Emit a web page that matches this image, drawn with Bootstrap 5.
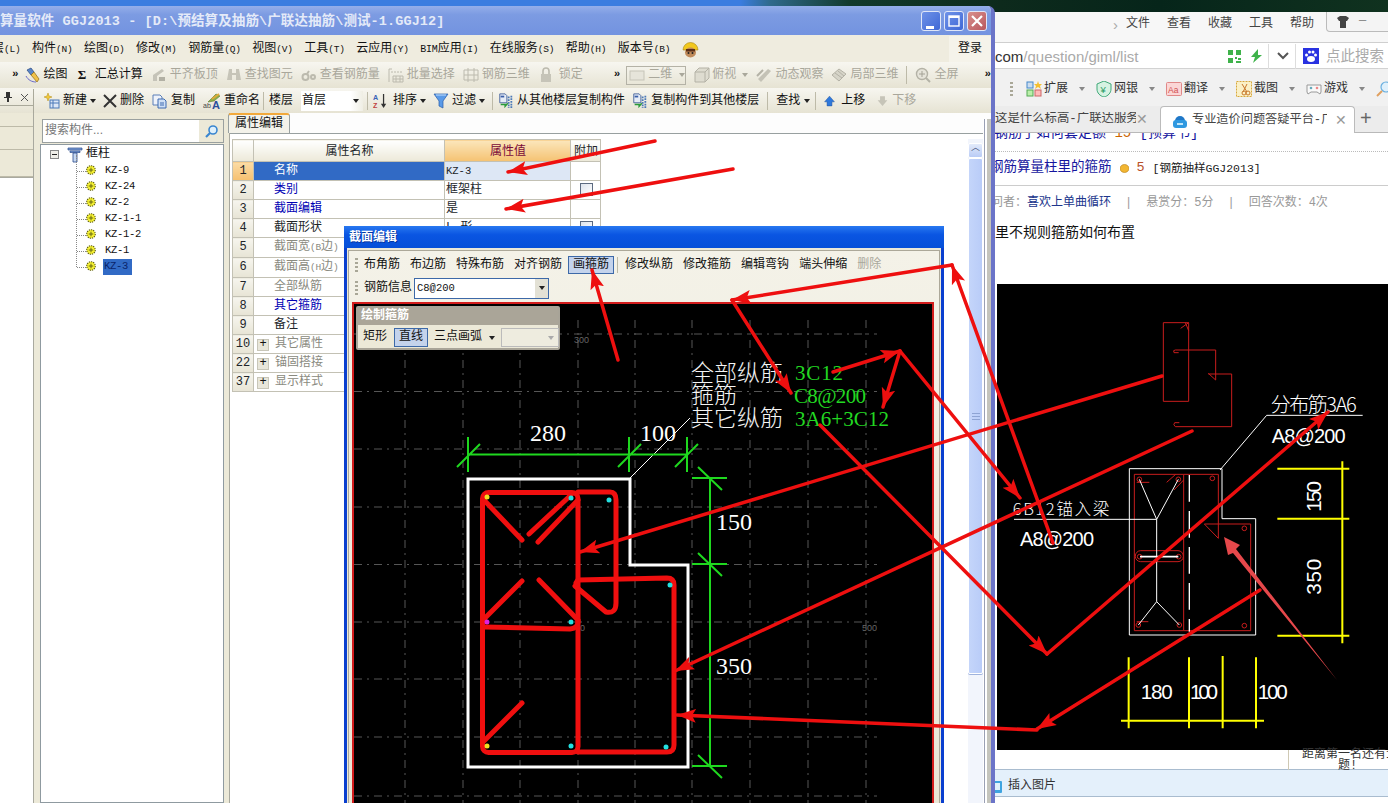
<!DOCTYPE html>
<html lang="zh-CN">
<head>
<meta charset="UTF-8">
<title>GGJ2013</title>
<link href="https://cdn.jsdelivr.net/npm/bootstrap@5.3.0/dist/css/bootstrap.min.css" rel="stylesheet">
<style>
html,body{margin:0;height:803px;overflow:hidden}
body{position:relative;width:1388px;font:12px/1.2 "Liberation Mono","Noto Sans CJK SC",monospace;color:#111;
  background:linear-gradient(90deg,#3b7de0 0,#3b7de0 740px,#2f6a8c 770px,#123a2c 850px,#0d2a1c 1000px,#06251a 1160px,#10321f 1388px)}
.ltn{font-size:9.5px;letter-spacing:-.2px}
.ic{width:16px;height:16px;flex:none}
.tri{display:inline-block;border:3px solid transparent;border-top:4px solid #222;border-bottom:0;flex:none}
.dis{color:#a9a79b}.dis .tri{border-top-color:#a9a79b}
.ggj-win{position:absolute;left:0;top:6px;width:995px;height:797px;z-index:5;background:#ece9d8;border-right:4px solid #6b74c8;overflow:hidden;border-top-right-radius:7px}
.ggj-title{height:29px;background:linear-gradient(180deg,#94aeea 0,#7c9be2 30%,#7393e0 100%);color:#e4eaf8;font-weight:700;font-size:13.5px;white-space:nowrap;letter-spacing:.1px}
.ggj-title>span:first-child{padding-top:4px}
.win-btn{width:20px;height:20px;border-radius:3px;border:1px solid #dfe6f7;background:linear-gradient(135deg,#6e92e8,#3f68d6);color:#fff;margin-left:3px}
.win-btn.cl{background:linear-gradient(135deg,#d8908c,#b9575e)}
.ggj-menu{height:27px;background:#efecdf;white-space:nowrap;padding-top:1px}
.ggj-menu>span{margin-right:11.5px}
.login-b{background:#f5f3ea;height:26px;padding:0 9px;margin-right:0!important}
.tbar{height:26px;background:linear-gradient(180deg,#f7f6f0,#e6e3d3);white-space:nowrap;gap:8px}
.tbar2{height:25px;gap:0;padding-top:1px}
.ti{display:inline-flex;align-items:center;gap:3px}
.vsep{width:1px;height:18px;background:#bdbaa8;flex:none}
.pin-col{width:34px;height:100%;flex:none;border-right:1px solid #aaa99b}
.pin-box{height:17px;border-bottom:1px solid #aaa99b;color:#333}
.ggj-main{height:690px;background:#ece9d8}
.rail{width:34px;flex:none;border-right:1px solid #a9a99f}
.rail i{display:block;height:23px;border-bottom:1px solid #bdbaa8}
.rail b{display:block;flex:1;background:#fff;border-top:1px solid #a9a99f}
.tree-pane{width:184px;margin-left:6px;flex:none}
.srch{height:24px;margin:6px 0 1px 2px;background:#fff;border:1px solid #9aa09f;color:#777;padding-left:2px}
.srch>span{flex:1}
.srch small{font:12px "Liberation Sans",sans-serif}
.srch em{width:24px;height:22px;background:#ece9d8;display:flex;align-items:center;justify-content:center}
.tree-box{flex:1;background:#fff;border:1px solid #8f9aa0;padding:0 0 0 9px}
.tr-row{height:16px;position:relative;padding-left:36px}
.tr-row svg{position:absolute;left:36px;top:2px}
.tr-row u{position:absolute;left:27px;top:8px;width:9px;border-top:1px dotted #888}
.tr-txt{font-size:10.5px;letter-spacing:-.3px;margin-left:18px;padding:1px;display:inline-block;height:16px;line-height:13px}
.tr-sel{background:#316ac5;color:#0a246a;margin-left:17px;padding:1px 4px 1px 1px}
.tr-line{position:absolute;left:26px;top:-8px;height:112px;border-left:1px dotted #888}
.pr-pane{width:765px;margin-left:5px;background:#fff;border-left:1px solid #a9a99f;flex:none}
.tab-strip{height:21px;border-bottom:1px solid #98a0a0;padding-left:0;background:#fdfdfd}
.tab-on{width:62px;height:20px;margin-left:-2px;border:1px solid #98a0a0;border-bottom:0;border-top:2px solid #f2a93b;border-radius:3px 3px 0 0;background:#f3f2ea;text-align:center;line-height:18px}
table.ptbl{table-layout:fixed;width:368px;margin:5px 0 0 2px;border-color:#c3c1b4}
table.ptbl td,table.ptbl th{padding:0 0 0 1px;height:19px;line-height:18px;font-weight:400;border:1px solid #c3c1b4;white-space:nowrap;overflow:hidden;box-shadow:none}
table.ptbl th{height:22px;text-align:center;background:linear-gradient(180deg,#fff,#ece9d8)}
table.ptbl th.hl{background:linear-gradient(180deg,#fbe6bb,#f5c272);color:#7a0a3a}
table.ptbl td.rn{text-align:center;background:linear-gradient(180deg,#f6f5ee,#e7e4d5);padding:0}
table.ptbl td.rn.on{background:linear-gradient(180deg,#fbdca6,#f6c070)}
td.nm{padding-left:20px!important}
td.nm.sel{background:#316ac5;color:#fff}
td.vl.sel{background:#dde7f5}
.bl{color:#0000b4}.gy{color:#8a8a80}
.chk{display:block;width:13px;height:13px;margin:2px auto;border:1px solid #5c6a80;background:linear-gradient(135deg,#dde3ec,#fff)}
.plus{display:inline-block;width:12px;height:12px;background:#e8e6da;border:1px solid #c8c6b8;line-height:9px;text-align:center;margin:0 6px 0 -17px;color:#111}
.sb-col{position:absolute;left:968px;top:133px;width:15px;height:670px;background:#f2f5fc}
.sb-col::after{content:"";position:absolute;left:15px;top:-20px;width:8px;height:690px;background:repeating-linear-gradient(90deg,#fff 0,#fff 1px,#9aa0b4 1px,#9aa0b4 2px,#fff 2px,#fff 4px,#c4c4bc 4px,#c4c4bc 8px)}
.sb-up{height:15px;background:linear-gradient(180deg,#e3ebfb,#b9cbf5);border:1px solid #fff;border-radius:2px;text-align:center;line-height:9px;color:#44527a;font-size:9px}
.sb-th{height:516px;background:linear-gradient(90deg,#c4d5fa,#b9ccf8);border:1px solid #fff;border-radius:2px;box-shadow:0 1px 0 #9fb3dd}
.dlg{position:absolute;left:344px;top:226px;width:600px;height:577px;z-index:8;background:#ece9d8;border:3px solid #0a3fcf;border-top:0;border-bottom:0}
.dlg-t{height:22px;margin:0 -3px;background:linear-gradient(180deg,#2878f0 0,#0a55e2 40%,#0650d8 100%);color:#fff;font-weight:700;padding-left:5px;line-height:25px;text-shadow:1px 1px 0 #0636a0;overflow:hidden}
.dlg-in{margin:2px 1px 0;border:1px solid #aca899;border-bottom:0;background:linear-gradient(180deg,#f4f2e8,#e9e6d6);height:553px}
.grip{width:3px;height:14px;margin:0 6px 0 6px;background:repeating-linear-gradient(180deg,#a9a797 0,#a9a797 2px,transparent 2px,transparent 4px);flex:none}
.d-bar{height:26px;white-space:nowrap;padding-top:3px}
.d-bar span.bt{margin-right:10px}
.press{border:1px solid #3d69a8;background:#c4d3ec;padding:1px 4px;white-space:nowrap}
.d-bar span.press{margin:0 3px 0 -4px}
.d-bar2{height:25px}
.cbx{width:135px;height:21px;margin-left:2px;border:1px solid #3d69a8;background:#fff;padding-left:2px;font-size:10.5px}
.cbx>span{flex:1}
.cbx em{width:13px;height:19px;background:#e3e1d5;display:flex;align-items:center;justify-content:center}
.cad{height:501px;margin:2px 5px 0 3px;border:2px solid #d31d1d;border-bottom:0;background:#000;position:relative}
.cad svg{display:block;width:100%;height:100%}
.float-tb{position:absolute;left:2px;top:2px;width:204px;height:44px;background:#ece9d8;border:2px solid #a8a498;border-radius:2px}
.float-h{height:17px;background:#aaa598;color:#fff;font-weight:700;padding-left:3px;line-height:17px}
.float-r{height:25px;padding-left:5px;white-space:nowrap}
.float-r .press{margin:0 6px 0 7px}
.cmb-d{width:58px;height:19px;border:1px solid #bbb;background:#eeecdf;margin-left:6px;flex:none}
.brw{position:absolute;left:980px;top:12px;width:408px;height:791px;background:#fff;overflow:hidden;border-top-left-radius:4px}
.b-menu{height:31px;background:#f7f7f7;border-bottom:1px solid #cfcfcf;position:relative;white-space:nowrap;color:#444;font-size:12px;padding-bottom:5px}
.b-menu a,.b-tools span{color:inherit;text-decoration:none}
.b-menu a{margin-right:17px}
.b-ctl{position:absolute;left:346px;top:0;width:70px;height:20px;border:1px solid #bbb;border-top:0;border-radius:0 0 0 4px;background:#f4f4f4}
.b-addr{height:26px;background:#fff;border-bottom:1px solid #d2d2d2;font:15px/1 "Liberation Sans","Noto Sans CJK SC",sans-serif;color:#aaa;white-space:nowrap;position:relative;padding-top:1px}
.b-addr b{font-weight:400;color:#333}
.b-tools{height:37px;background:#f1f1f1;white-space:nowrap;color:#333;font-size:12px;padding-top:3px}
.b-tools .ic{margin-right:2px}
.b-tools .tri{border-top-color:#888;margin:0 11px}
.b-tabs{height:27px;background:#ececec;border-bottom:1px solid #b9b9b9;position:relative;white-space:nowrap;color:#444;padding-top:1px}
.b-tab-a{position:absolute;left:180px;top:0;width:195px;height:27px;background:#fff;border:1px solid #bbb;border-bottom:0;border-radius:4px 4px 0 0;padding-left:11px;padding-top:1px}
.b-x{font-size:14px;color:#999;font-family:"Liberation Sans",sans-serif}
.b-page{height:670px;background:#fff;position:relative;overflow:hidden}
.p-cut{height:19px;border-bottom:1px dotted #bbb;font-size:14px;color:#15159e;padding-left:14px;overflow:hidden;line-height:1;white-space:nowrap}
.p-cut div{margin-top:-7px}
.p-ttl{height:34px;border-bottom:1px solid #ccc;white-space:nowrap;font-size:13.5px;color:#15159e;padding-left:10px}
.p-meta{height:34px;color:#999;white-space:nowrap;padding-left:11px}
.p-q{height:26px;font-size:14px;color:#111;padding-left:15px}
.p-img{margin:38px 0 0 17px;height:466px;background:#000}
.p-img svg{display:block;width:391px;height:466px}
.p-foot{height:20px;position:relative;border-bottom:1px solid #a9bccf;margin-left:15px}
.p-foot div{position:absolute;left:293px;top:0;height:20px;width:110px;border-left:1px solid #cfc9b4;text-align:center;font-size:12px;line-height:11px;color:#333;white-space:nowrap;padding-left:8px}
.p-ins{height:27px;background:#e4f0fb;border-bottom:1px solid #a9bccf;margin-left:15px;color:#333;font-size:12px;padding-top:7px}
.p-ins svg{margin-left:-5px}
.arrows{position:absolute;left:0;top:0;width:1388px;height:803px;z-index:20;pointer-events:none}
</style>
</head>
<body>

<svg width="0" height="0" class="position-absolute">
 <defs>
  <symbol id="i-draw" viewBox="0 0 16 16"><path d="M2 3l4-2 3 4-3 3z" fill="#5a86c8" stroke="#27467f" stroke-width=".7"/><path d="M6 8l3-3 5 7-2 3z" fill="#f0c24a" stroke="#8a6a18" stroke-width=".7"/><path d="M1 9c2 4 6 6 10 6" fill="none" stroke="#6a6ac8"/></symbol>
  <symbol id="i-flush" viewBox="0 0 16 16"><path d="M2 14V8l9-6 2 2-7 5v5z" fill="#c5c3b8"/><path d="M8 10h6v4H8z" fill="#b2b0a4"/></symbol>
  <symbol id="i-bino" viewBox="0 0 16 16"><path d="M3 2h3v4h4V2h3l2 11h-5V8H6v5H1z" fill="#c6c4b8"/></symbol>
  <symbol id="i-glass" viewBox="0 0 16 16"><circle cx="4.5" cy="10" r="3" fill="none" stroke="#bcbaae" stroke-width="2"/><circle cx="12" cy="10" r="2" fill="none" stroke="#bcbaae" stroke-width="2"/><path d="M6 7l2-3" stroke="#bcbaae" stroke-width="2"/></symbol>
  <symbol id="i-batch" viewBox="0 0 16 16"><path d="M1 2v13M1 2h3M5 9h10v6H5zM5 12h10M8 9v6M12 9v6" fill="none" stroke="#bcbaae"/><path d="M3 5h11" stroke="#bcbaae" stroke-dasharray="2 1"/></symbol>
  <symbol id="i-grid" viewBox="0 0 16 16"><path d="M1 3h14v10H1zM1 8h14M5 1v14M11 1v14" fill="none" stroke="#bcbaae"/></symbol>
  <symbol id="i-lock" viewBox="0 0 16 16"><path d="M5 7V4a3 3 0 016 0v3" fill="none" stroke="#bcbaae" stroke-width="1.6"/><rect x="3" y="7" width="10" height="8" fill="#c6c4b8"/></symbol>
  <symbol id="i-cube" viewBox="0 0 16 16"><path d="M1 5l4-4h10v10l-4 4H1zM1 5h10v10M11 5l4-4" fill="#dedcd0" stroke="#b4b2a6"/></symbol>
  <symbol id="i-orbit" viewBox="0 0 16 16"><path d="M2 12L12 2l3 2L5 15z" fill="#c4c2b6"/><path d="M1 9l6-6" stroke="#b4b2a6" stroke-width="2"/></symbol>
  <symbol id="i-local" viewBox="0 0 16 16"><path d="M1 8l7-6 7 5-7 7z" fill="#d6d4c8" stroke="#b4b2a6"/><path d="M4 6l7 5M7 4l6 5" stroke="#b4b2a6"/></symbol>
  <symbol id="i-zoom" viewBox="0 0 16 16"><circle cx="7" cy="7" r="5.5" fill="#e6e4da" stroke="#b4b2a6" stroke-width="1.4"/><path d="M7 4v6M4 7h6" stroke="#a4a296"/><path d="M11 11l4 4" stroke="#b4b2a6" stroke-width="2"/></symbol>
  <symbol id="i-new" viewBox="0 0 16 16"><path d="M4 0l1 3 3 1-3 1-1 3-1-3-3-1 3-1z" fill="#f2c93a" stroke="#b48c10" stroke-width=".5"/><rect x="6" y="7" width="9" height="8" fill="#dbe6f6" stroke="#4a78b8"/><path d="M6 10h9M9 7v8" stroke="#4a78b8"/></symbol>
  <symbol id="i-del" viewBox="0 0 14 14"><path d="M1 1l12 12M13 1L1 13" stroke="#333" stroke-width="2"/></symbol>
  <symbol id="i-copy" viewBox="0 0 16 16"><path d="M1 2h7l2 2v8H1z" fill="#eef2fa" stroke="#5a7fb8"/><path d="M6 6h6l2 2v7H6z" fill="#cfe0f6" stroke="#3f6bb0"/><path d="M8 10h4M8 12h4" stroke="#3f6bb0"/></symbol>
  <symbol id="i-rename" viewBox="0 0 18 16"><path d="M5 9l8-8 4 2-6 5z" fill="#8bb04a" stroke="#5c7a2e" stroke-width=".6"/><path d="M9 6l7-5" stroke="#e0a93a" stroke-width="2"/><text x="0" y="15" font-family="Liberation Sans" font-size="7" fill="#444">ab</text><text x="9" y="15.5" font-family="Liberation Sans" font-weight="700" font-size="11" fill="#2a4f9c">A</text></symbol>
  <symbol id="i-sort" viewBox="0 0 16 18"><text x="0" y="8" font-family="Liberation Sans" font-weight="700" font-size="8" fill="#3a62b8">A</text><text x="0" y="17" font-family="Liberation Sans" font-weight="700" font-size="8" fill="#c04040">Z</text><path d="M12 1v14" stroke="#333" stroke-width="1.4"/><path d="M9 12l3 5 3-5z" fill="#333"/></symbol>
  <symbol id="i-filter" viewBox="0 0 16 16"><path d="M1 1h14L10 8v7l-4-2V8z" fill="#5a9ae8" stroke="#2a5ca8" stroke-width=".7"/><path d="M3 2h10" stroke="#c6e0fb"/></symbol>
  <symbol id="i-floor" viewBox="0 0 16 18"><path d="M1 1h6l2 2v8H1z" fill="#e6ecf6" stroke="#3f5f98"/><path d="M11 4v13M14 3v14" stroke="#4a78b8" stroke-width="2" stroke-dasharray="2 1"/><path d="M2 13h5v2l3-3.5" fill="none" stroke="#2a9a3a" stroke-width="1.6"/><rect x="2" y="3" width="4" height="2" fill="#3a5fa8"/></symbol>
  <symbol id="i-up" viewBox="0 0 16 16"><path d="M8 2l6 7h-3v5H5V9H2z" fill="#2f79dc" stroke="#1f4f9c" stroke-width=".6"/></symbol>
  <symbol id="i-down" viewBox="0 0 16 16"><path d="M8 14L2 7h3V2h6v5h3z" fill="#c6c4b8"/></symbol>
  <symbol id="i-gear" viewBox="0 0 11 11"><circle cx="5.5" cy="5.5" r="4.7" fill="#f5f032" stroke="#5a5a10" stroke-width="1.2" stroke-dasharray="1.4 1"/><path d="M3 5.5h5M5.5 3v5" stroke="#5a5a10"/></symbol>
 </defs>
</svg>

<!-- browser behind -->
<div class="brw d-flex flex-column">
 <div class="b-menu d-flex align-items-center" style="padding-left:133px">
  <span class="me-2" style="font-family:'Liberation Sans';color:#aaa;font-size:15px">›</span>
  <a href="#">文件</a><a href="#">查看</a><a href="#">收藏</a><a href="#">工具</a><a href="#">帮助</a>
  <div class="b-ctl d-flex align-items-center">
   <svg class="ic ms-2" viewBox="0 0 16 16"><path d="M2 4l3-2h6l3 2-2 3h-1v7H5V7H4z" fill="#444"/></svg>
   <span class="ms-2" style="color:#888">—</span>
  </div>
 </div>
 <div class="b-addr d-flex align-items-center" style="padding-left:15px">
  <span style="width:233px"><b>com</b>/question/giml/list</span>
  <svg class="ic" style="width:13px;height:13px" viewBox="0 0 13 13"><path d="M0 0h5v5H0zM8 0h5v5H8zM0 8h5v5H0zM7 7h2v2H7zM10 8h3v2h-3zM8 11h5v2H8z" fill="#3eb24a"/></svg>
  <svg class="ic" style="margin-left:9px;width:13px;height:14px" viewBox="0 0 13 14"><path d="M8 0L1 8h4l-2 6 9-8H8z" fill="#3eb24a"/></svg>
  <span style="width:1px;height:25px;background:#ddd;margin:0 8px 0 5px"></span>
  <svg class="ic" style="width:12px;height:8px" viewBox="0 0 12 8"><path d="M1 1l5 5 5-5" fill="none" stroke="#555" stroke-width="2"/></svg>
  <span style="width:1px;height:25px;background:#ddd;margin:0 7px 0 6px"></span>
  <svg class="ic" viewBox="0 0 16 16"><rect width="16" height="16" fill="#2932e1"/><ellipse cx="8" cy="11" rx="4" ry="3" fill="#fff"/><circle cx="3.5" cy="7" r="1.5" fill="#fff"/><circle cx="6.5" cy="4" r="1.5" fill="#fff"/><circle cx="10" cy="4" r="1.5" fill="#fff"/><circle cx="12.5" cy="7" r="1.5" fill="#fff"/></svg>
  <span style="margin-left:7px;color:#aaa;font-size:14.5px">点此搜索</span>
 </div>
 <div class="b-tools d-flex align-items-center" style="padding-left:30px">
  <span class="grip" style="margin:0 13px 0 0"></span>
  <svg class="ic" viewBox="0 0 16 16"><rect x="1" y="1" width="6" height="6" fill="#cde" stroke="#48c"/><rect x="1" y="9" width="6" height="6" fill="#bea" stroke="#5a5"/><rect x="9" y="9" width="6" height="6" fill="#fbb" stroke="#c66"/><path d="M12 0l1 3h3l-2 2 1 3-3-2-3 2 1-3-2-2h3z" fill="#f5c030"/></svg>
  <span>扩展</span><span class="tri"></span>
  <svg class="ic" viewBox="0 0 16 16"><path d="M8 0l7 3v5c0 4-3 7-7 8-4-1-7-4-7-8V3z" fill="#d6f2e2" stroke="#3fa878"/><text x="4.5" y="12" font-family="Liberation Sans" font-size="9.5" fill="#2a9a64">¥</text></svg>
  <span>网银</span><span class="tri"></span>
  <svg class="ic" viewBox="0 0 16 16"><rect x=".5" y="1.500" width="15" height="13" rx="1" fill="#fbd6d6" stroke="#e08888"/><text x="2" y="12" font-family="Liberation Sans" font-size="8.5" fill="#d05050">Aa</text></svg>
  <span>翻译</span><span class="tri"></span>
  <svg class="ic" viewBox="0 0 16 16"><rect x=".5" y=".5" width="15" height="15" fill="#fbf0c6" stroke="#d8a93a" stroke-dasharray="2 1"/><circle cx="8" cy="12" r="2" fill="none" stroke="#c8772a"/><circle cx="12" cy="12" r="2" fill="none" stroke="#c8772a"/><path d="M6 3l5 8M11 3l-4 8" stroke="#c8772a"/></svg>
  <span>截图</span><span class="tri"></span>
  <svg class="ic" viewBox="0 0 16 16"><path d="M1 4h14v7l-1 2-3-2H5l-3 2-1-2z" fill="#f9f9f9" stroke="#999"/><circle cx="5" cy="7" r="1.3" fill="#6ab"/><circle cx="11" cy="7" r="1.3" fill="#e88"/></svg>
  <span>游戏</span><span class="tri"></span>
  <svg class="ic" viewBox="0 0 16 16"><circle cx="10" cy="6" r="5" fill="#dff0fb" stroke="#6ab0e0" stroke-width="1.2"/><path d="M6 10l-5 5" stroke="#e0a060" stroke-width="2"/></svg>
 </div>
 <div class="b-tabs d-flex align-items-center" style="padding-left:15px">
  <span style="width:141px;overflow:hidden;font-size:12.4px">这是什么标高-广联达服务</span>
  <span class="b-x">✕</span>
  <div class="b-tab-a d-flex align-items-center">
   <svg class="ic" viewBox="0 0 16 16"><path d="M3 8a5 5 0 0110 0z" fill="#1f78c8"/><rect x="1" y="7" width="14" height="8" rx="3" fill="#2f98e0"/><path d="M5 11h6" stroke="#bfe6fb" stroke-width="2"/></svg>
   <span class="ms-1" style="width:135px;overflow:hidden;font-size:12.2px">专业造价问题答疑平台-广</span>
   <span class="b-x" style="margin-left:8px">✕</span>
  </div>
  <span style="position:absolute;left:380px;top:2px;font:20px/1 'Liberation Sans';color:#666">+</span>
 </div>
 <div class="b-page">
  <div class="p-cut"><div>钢筋了如何套定额 <span style="color:#c60">15</span> [预算书]</div></div>
  <div class="p-ttl d-flex align-items-center">
   <span>钢筋算量柱里的箍筋</span>
   <svg class="ms-2" width="9" height="9" viewBox="0 0 9 9"><ellipse cx="4.5" cy="4.5" rx="4.5" ry="4" fill="#f2b632" stroke="#b57a10" stroke-width=".6"/></svg>
   <span class="ms-2" style="color:#b8502a">5</span>
   <span class="ms-2" style="color:#222;font-size:11.5px">[钢筋抽样GGJ2013]</span>
  </div>
  <div class="p-meta d-flex align-items-center">
   <span style="color:#999">问者：</span><span style="color:#20358c">喜欢上单曲循环</span>
   <span style="margin:0 14px">|</span><span>悬赏分：5分</span>
   <span style="margin:0 14px">|</span><span>回答次数：4次</span>
  </div>
  <div class="p-q d-flex align-items-center">里不规则箍筋如何布置</div>
  <div class="p-img">
   <svg viewBox="21 -48 1173 1398">
    <g fill="none" stroke="#c81d1d" stroke-width="3">
     <path d="M520 68h76v236h-76zM572 85l24-17M596 92l-10-24"/>
     <path d="M566 158h-14q-4-8 4-8h121v90M655 220l22 20M655 222h70v158H556q-8-6-2-12h14"/>
     <path d="M433 523h148v469H433zM581 523h104v192l-42-43h139v320H581M530 547l27-24M552 570l29-30M440 547h38M440 965h35"/>
     <rect x="436" y="752" width="144" height="33" rx="16"/>
     <circle cx="448" cy="538" r="7"/><circle cx="565" cy="538" r="7"/><circle cx="667" cy="535" r="7"/><circle cx="449" cy="770" r="7"/><circle cx="566" cy="770" r="7"/><circle cx="445" cy="975" r="7"/><circle cx="568" cy="975" r="7"/><circle cx="763" cy="685" r="7"/><circle cx="763" cy="977" r="7"/>
    </g>
    <g fill="none" stroke="#fff" stroke-width="3">
     <path d="M418 506h278v150h101v349H418z"/>
     <path d="M1118 346H830L690 510M72 658h428M500 658l-52-120M500 658l65-120M500 658v247M500 905l-55 70M500 905l68 70"/>
     <path d="M450 770h115" stroke-width="5"/>
     <path d="M598 525v470" stroke-dasharray="80 28" stroke-width="4"/>
    </g>
    <g fill="none" stroke="#ff0" stroke-width="6">
     <path d="M862 506h216M862 656h216M862 1007h216M1057 484v546M393 1262h429M416 1072v213M597 1072v213M698 1068v217M798 1072v213"/>
    </g>
    <g fill="#fff" font-family="Liberation Sans">
     <text x="452" y="1198" font-size="62" textLength="96">180</text>
     <text x="600" y="1198" font-size="62" textLength="84">100</text>
     <text x="803" y="1198" font-size="62" textLength="90">100</text>
     <text transform="translate(993 635) rotate(-90)" font-size="62" textLength="92">150</text>
     <text transform="translate(993 884) rotate(-90)" font-size="62" textLength="108">350</text>
     <text x="845" y="428" font-size="60" textLength="222">A8@200</text>
     <text x="90" y="738" font-size="60" textLength="222">A8@200</text>
     <text x="842" y="335" font-size="60" font-family="Noto Sans CJK SC" font-weight="300" textLength="258">分布筋3A6</text>
     <text x="68" y="645" font-size="50" font-family="Noto Sans CJK SC" font-weight="300" textLength="290">6B12锚入梁</text>
    </g>
   </svg>
  </div>
  <div class="p-foot"><div>距离第一名还有1<br>题!</div></div>
  <div class="p-ins d-flex align-items-center">
   <svg width="12" height="12" viewBox="0 0 12 12"><rect width="12" height="12" rx="1" fill="#3fa4e0"/><rect x="2" y="2" width="8" height="7" fill="#dff1fb"/></svg>
   <span style="margin-left:6px">插入图片</span>
  </div>
 </div>
</div>

<!-- main app window -->
<div class="ggj-win d-flex flex-column">
 <div class="ggj-title d-flex align-items-center">
  <span class="flex-grow-1">算量软件 GGJ2013 - [D:\预结算及抽筋\广联达抽筋\测试-1.GGJ12]</span>
  <span class="win-btn d-flex align-items-end justify-content-center"><svg width="10" height="5"><rect y="1" width="8" height="3" fill="#fff"/></svg></span>
  <span class="win-btn d-flex align-items-center justify-content-center"><svg width="12" height="12"><rect x="1" y="1" width="10" height="10" fill="none" stroke="#fff" stroke-width="1.4"/><rect x="1" y="1" width="10" height="2" fill="#fff"/></svg></span>
  <span class="win-btn cl d-flex align-items-center justify-content-center me-1"><svg width="12" height="12"><path d="M1 1l10 10M11 1L1 11" stroke="#fff" stroke-width="2.2"/></svg></span>
 </div>
 <div class="ggj-menu d-flex align-items-center" style="margin-left:-8px">
  <span>层<i class="ltn fst-normal">(L)</i></span><span>构件<i class="ltn fst-normal">(N)</i></span><span>绘图<i class="ltn fst-normal">(D)</i></span><span>修改<i class="ltn fst-normal">(M)</i></span><span>钢筋量<i class="ltn fst-normal">(Q)</i></span><span>视图<i class="ltn fst-normal">(V)</i></span><span>工具<i class="ltn fst-normal">(T)</i></span><span>云应用<i class="ltn fst-normal">(Y)</i></span><span><i class="ltn fst-normal" style="font-size:10px">BIM</i>应用<i class="ltn fst-normal">(I)</i></span><span>在线服务<i class="ltn fst-normal">(S)</i></span><span>帮助<i class="ltn fst-normal">(H)</i></span><span>版本号<i class="ltn fst-normal">(B)</i></span>
  <svg width="17" height="17" viewBox="0 0 17 17" class="flex-none"><path d="M1 9a7.5 7.5 0 0115 0z" fill="#f2c81e" stroke="#a88410" stroke-width=".6"/><ellipse cx="8.5" cy="11.5" rx="5.5" ry="5" fill="#c08a5a"/><rect x="4" y="8" width="9" height="2.5" fill="#5a2e18"/><circle cx="6.5" cy="12" r="1" fill="#222"/><circle cx="10.5" cy="12" r="1" fill="#222"/></svg>
  <span class="login-b d-flex align-items-center ms-auto">登录</span>
 </div>
 <div class="tbar d-flex align-items-center" style="padding-left:12px">
  <b style="font-size:11px;margin-right:-2px">»</b>
  <span class="ti"><svg class="ic"><use href="#i-draw"/></svg>绘图</span>
  <span class="ti" style="margin-left:2px"><b style="width:9px;font-family:'Liberation Serif';font-size:13px">Σ</b><span style="margin-left:5px">汇总计算</span></span>
  <span class="ti dis"><svg class="ic"><use href="#i-flush"/></svg>平齐板顶</span>
  <span class="ti dis"><svg class="ic"><use href="#i-bino"/></svg>查找图元</span>
  <span class="ti dis"><svg class="ic"><use href="#i-glass"/></svg>查看钢筋量</span>
  <span class="ti dis"><svg class="ic"><use href="#i-batch"/></svg>批量选择</span>
  <span class="ti dis"><svg class="ic"><use href="#i-grid"/></svg>钢筋三维</span>
  <span class="ti dis"><svg class="ic"><use href="#i-lock"/></svg><span style="margin-left:2px">锁定</span></span>
  <b style="font-size:11px;margin-left:23px">»</b>
  <span class="ti dis" style="border:1px solid #b4b2a6;height:19px;width:62px;padding-left:2px;gap:3px;margin-left:-2px"><svg class="ic"><rect x="1" y="4" width="14" height="9" fill="#e6e4da" stroke="#c6c4b8"/></svg>二维<span class="tri ms-1"></span></span>
  <span class="ti dis" style="gap:2px"><svg class="ic"><use href="#i-cube"/></svg>俯视<span class="tri ms-1"></span></span>
  <span class="ti dis"><svg class="ic"><use href="#i-orbit"/></svg>动态观察</span>
  <span class="ti dis"><svg class="ic"><use href="#i-local"/></svg>局部三维</span>
  <span class="vsep"></span>
  <span class="ti dis"><svg class="ic"><use href="#i-zoom"/></svg>全屏</span>
  <b style="font-size:11px;margin-left:18px">»</b>
 </div>
 <div class="tbar tbar2 d-flex align-items-center">
  <div class="pin-col">
   <div class="pin-box d-flex align-items-center justify-content-around">
    <svg width="8" height="10" viewBox="0 0 8 10"><path d="M2 0h4v5h2v1H5v4H3V6H0V5h2z" fill="#333"/></svg>
    <svg width="9" height="9" viewBox="0 0 9 9"><path d="M1 1l7 7M8 1L1 8" stroke="#555"/></svg>
   </div>
  </div>
  <span class="ti" style="margin-left:10px"><svg class="ic"><use href="#i-new"/></svg>新建<span class="tri"></span></span>
  <span class="ti" style="margin-left:7px"><svg class="ic" style="width:14px"><use href="#i-del"/></svg>删除</span>
  <span class="ti" style="margin-left:8px"><svg class="ic"><use href="#i-copy"/></svg>复制</span>
  <span class="ti" style="margin-left:8px"><svg class="ic" style="width:18px" viewBox="0 0 18 16"><use href="#i-rename"/></svg>重命名</span>
  <span class="vsep" style="margin:0 3px"></span>
  <span style="margin-left:2px">楼层</span>
  <span class="d-flex align-items-center" style="margin-left:8px;width:62px;height:20px;padding-left:1px;justify-content:space-between;padding-right:4px;background:linear-gradient(90deg,#fff 80%,#efeee4)">首层<span class="tri"></span></span>
  <span class="vsep" style="margin:0 4px"></span>
  <span class="ti"><svg class="ic" viewBox="0 0 16 18"><use href="#i-sort"/></svg><span style="margin-left:2px">排序</span><span class="tri"></span></span>
  <span class="ti" style="margin-left:7px"><svg class="ic"><use href="#i-filter"/></svg>过滤<span class="tri"></span></span>
  <span class="vsep" style="margin:0 5px 0 7px"></span>
  <span class="ti"><svg class="ic"><use href="#i-floor"/></svg>从其他楼层复制构件</span>
  <span class="ti" style="margin-left:7px"><svg class="ic"><use href="#i-floor"/></svg>复制构件到其他楼层</span>
  <span class="vsep" style="margin:0 8px"></span>
  <span>查找</span><span class="tri ms-1"></span>
  <span class="vsep" style="margin:0 7px 0 5px"></span>
  <span class="ti"><svg class="ic" style="width:13px"><use href="#i-up"/></svg><span style="margin-left:2px">上移</span></span>
  <span class="ti dis" style="margin-left:11px"><svg class="ic" style="width:13px"><use href="#i-down"/></svg>下移</span>
 </div>
 <div class="ggj-main d-flex">
  <div class="rail d-flex flex-column"><i style="height:14px"></i><i></i><i style="height:27px"></i><b></b></div>
  <div class="tree-pane d-flex flex-column">
   <div class="srch d-flex align-items-center"><span>搜索构件<small>...</small></span><em><svg width="15" height="15" viewBox="0 0 15 15"><circle cx="9" cy="6" r="4" fill="#dff0fb" stroke="#3a86d0" stroke-width="1.6"/><path d="M6 9l-4 4" stroke="#3a86d0" stroke-width="2.2"/></svg></em></div>
   <div class="tree-box position-relative">
    <div class="d-flex align-items-center" style="height:17px;margin-top:1px">
     <svg width="9" height="9" viewBox="0 0 9 9"><rect x=".5" y=".5" width="8" height="8" fill="#efeee8" stroke="#888"/><path d="M2 4.5h5" stroke="#222"/></svg>
     <svg class="ms-2" width="16" height="16" viewBox="0 0 16 16"><path d="M1 1h14v2H1zM3 4h10v1.500H3z" fill="#7fa0d8" stroke="#2a4a8c" stroke-width=".7"/><path d="M6 6h4v9H6z" fill="#c6d8f2" stroke="#2a4a8c" stroke-width=".8"/></svg>
     <span style="margin-left:3px">框柱</span>
    </div>
    <div class="position-relative">
     <span class="tr-line"></span>
     <div class="tr-row"><u></u><svg width="10" height="10"><use href="#i-gear"/></svg><span class="tr-txt">KZ-9</span></div>
     <div class="tr-row"><u></u><svg width="10" height="10"><use href="#i-gear"/></svg><span class="tr-txt">KZ-24</span></div>
     <div class="tr-row"><u></u><svg width="10" height="10"><use href="#i-gear"/></svg><span class="tr-txt">KZ-2</span></div>
     <div class="tr-row"><u></u><svg width="10" height="10"><use href="#i-gear"/></svg><span class="tr-txt">KZ-1-1</span></div>
     <div class="tr-row"><u></u><svg width="10" height="10"><use href="#i-gear"/></svg><span class="tr-txt">KZ-1-2</span></div>
     <div class="tr-row"><u></u><svg width="10" height="10"><use href="#i-gear"/></svg><span class="tr-txt">KZ-1</span></div>
     <div class="tr-row"><u></u><svg width="10" height="10"><use href="#i-gear"/></svg><span class="tr-txt tr-sel">KZ-3</span></div>
    </div>
   </div>
  </div>
  <div class="pr-pane">
   <div class="tab-strip d-flex align-items-end"><div class="tab-on">属性编辑</div></div>
   <table class="table ptbl mb-0">
    <colgroup><col style="width:21px"><col style="width:191px"><col style="width:126px"><col style="width:30px"></colgroup>
    <thead><tr><th></th><th>属性名称</th><th class="hl">属性值</th><th>附加</th></tr></thead>
    <tbody>
     <tr><td class="rn on">1</td><td class="nm sel">名称</td><td class="vl sel" style="font-size:10.5px">KZ-3</td><td></td></tr>
     <tr><td class="rn">2</td><td class="nm bl">类别</td><td>框架柱</td><td><span class="chk"></span></td></tr>
     <tr><td class="rn">3</td><td class="nm bl">截面编辑</td><td>是</td><td></td></tr>
     <tr><td class="rn">4</td><td class="nm">截面形状</td><td>L-形</td><td><span class="chk"></span></td></tr>
     <tr><td class="rn">5</td><td class="nm gy">截面宽<i class="ltn fst-normal">(B</i>边<i class="ltn fst-normal">)</i></td><td></td><td></td></tr>
     <tr><td class="rn">6</td><td class="nm gy">截面高<i class="ltn fst-normal">(H</i>边<i class="ltn fst-normal">)</i></td><td></td><td></td></tr>
     <tr><td class="rn">7</td><td class="nm gy">全部纵筋</td><td></td><td></td></tr>
     <tr><td class="rn">8</td><td class="nm bl">其它箍筋</td><td></td><td></td></tr>
     <tr><td class="rn">9</td><td class="nm">备注</td><td></td><td></td></tr>
     <tr><td class="rn">10</td><td class="nm gy"><span class="plus">+</span>其它属性</td><td></td><td></td></tr>
     <tr><td class="rn">22</td><td class="nm gy"><span class="plus">+</span>锚固搭接</td><td></td><td></td></tr>
     <tr><td class="rn">37</td><td class="nm gy"><span class="plus">+</span>显示样式</td><td></td><td></td></tr>
    </tbody>
   </table>
  </div>
 </div>
 <div class="sb-col">
  <div class="sb-up mt-1">︿</div>
  <div class="sb-th d-flex align-items-center justify-content-center"><svg width="8" height="7"><path d="M0 .5h8M0 3.500h8M0 6.500h8" stroke="#8ea4d4"/></svg></div>
 </div>
</div>

<!-- section editor dialog -->
<div class="dlg d-flex flex-column">
 <div class="dlg-t">截面编辑</div>
 <div class="dlg-in d-flex flex-column">
  <div class="d-bar d-flex align-items-center">
   <span class="grip" style="margin-right:6px"></span>
   <span class="bt">布角筋</span><span class="bt">布边筋</span><span class="bt">特殊布筋</span><span class="bt">对齐钢筋</span><span class="bt press">画箍筋</span><span class="vsep" style="height:16px;margin-right:7px"></span><span class="bt">修改纵筋</span><span class="bt">修改箍筋</span><span class="bt">编辑弯钩</span><span class="bt">端头伸缩</span><span class="bt dis">删除</span>
  </div>
  <div class="d-bar2 d-flex align-items-center">
   <span class="grip" style="margin-right:6px"></span>
   <span>钢筋信息</span>
   <div class="cbx d-flex align-items-center"><span>C8@200</span><em><span class="tri"></span></em></div>
  </div>
  <div class="cad flex-grow-1">
   <svg viewBox="354 304 578 499" preserveAspectRatio="xMinYMin slice">
    <g stroke="#565656" stroke-width="1" stroke-dasharray="8 5 2 5" fill="none">
     <path d="M354 334H877M354 391.500H877M354 449H877M354 507H877M354 564.500H877M354 622H877M354 679H877M354 737H877M354 796H877"/>
     <path d="M405 320V803M463 320V803M520 320V803M578 320V803M635 320V803M692 320V803M750 320V803M808 320V803M866 320V803"/>
    </g>
    <g fill="#666" font-family="Liberation Sans" font-size="9">
     <text x="574" y="343">300</text><text x="580" y="631">0</text><text x="862" y="631">500</text>
    </g>
    <path d="M468 479H630V565H688V767H468Z" fill="none" stroke="#fff" stroke-width="3"/>
    <path d="M630 478L690 418" stroke="#fff" stroke-width="1"/>
    <g stroke="#1fd81f" stroke-width="2" fill="none">
     <path d="M468 454.500H687M468 437V472M629 437V472M687 437V472M457 467L480 444M618 467L641 444M675 467L698 444"/>
     <path d="M710 478V766M692 478H727M692 564H727M692 766H727M698 467L722 490M698 553L722 576M698 755L722 778"/>
    </g>
    <g fill="none" stroke="#f00f0f" stroke-width="5" stroke-linejoin="round" stroke-linecap="round">
     <rect x="482.500" y="492.500" width="95.500" height="260" rx="6"/>
     <path d="M578 492H610Q616 492 616 500V603Q616 614 606 612L575 586"/>
     <path d="M576 583L578 580L667 578Q674 578 674 585V745Q674 752 667 752H578"/>
     <path d="M484 627L570 629Q578 628 578 622"/>
     <path d="M483 499L522 540M529 534L571 495M538 542L578 500M522 581L483 620M539 580L578 620M522 703L483 742"/>
    </g>
    <g fill="#23e0e0"><circle cx="571" cy="498" r="2.500"/><circle cx="609" cy="500" r="2.500"/><circle cx="571" cy="622" r="2.500"/><circle cx="670" cy="585" r="2.500"/><circle cx="571" cy="746" r="2.500"/><circle cx="666" cy="747" r="2.500"/></g>
    <g fill="#f2e020"><circle cx="487" cy="497" r="2.500"/><circle cx="487" cy="746" r="2.500"/></g>
    <circle cx="487" cy="622" r="2.500" fill="#e020e0"/>
    <g fill="#fff" font-family="Liberation Serif" font-size="24">
     <text x="530" y="441">280</text><text x="640" y="441">100</text><text x="716" y="530">150</text><text x="716" y="674">350</text>
    </g>
    <g fill="#f4f4f4" font-family="Noto Sans CJK SC" font-size="23" font-weight="300">
     <text x="691" y="381">全部纵筋</text><text x="691" y="403">箍筋</text><text x="691" y="426">其它纵筋</text>
    </g>
    <g fill="#22d822" font-family="Liberation Serif" font-size="21">
     <text x="795" y="380" textLength="48">3C12</text><text x="794" y="403" textLength="72">C8@200</text><text x="795" y="426" textLength="94">3A6+3C12</text>
    </g>
   </svg>
   <div class="float-tb">
    <div class="float-h">绘制箍筋</div>
    <div class="float-r d-flex align-items-center">
     <span>矩形</span><span class="press">直线</span><span>三点画弧</span><span class="tri" style="margin-left:7px"></span><span class="cmb-d d-flex align-items-center justify-content-end pe-1"><span class="tri" style="border-top-color:#aaa"></span></span>
    </div>
   </div>
  </div>
 </div>
</div>

<!-- red annotations pasted on top of everything -->
<svg class="arrows" viewBox="0 0 1388 803">
 <defs>
  <marker id="ah" markerUnits="userSpaceOnUse" markerWidth="20" markerHeight="16" refX="19" refY="8" orient="auto"><path d="M0 1L19 8L0 15L4 8Z" fill="#ee0f0f"/></marker>
 </defs>
 <g stroke="#ee0f0f" stroke-width="3.500" fill="none" stroke-linecap="round">
  <path d="M655 141L508 172" marker-end="url(#ah)"/>
  <path d="M733 169L506 209" marker-end="url(#ah)"/>
  <path d="M618 360L592 270" marker-end="url(#ah)"/>
  <path d="M952 265L732 300" marker-end="url(#ah)"/>
  <path d="M732 300L791 393" marker-end="url(#ah)"/>
  <path d="M1053 543L952 265" marker-end="url(#ah)"/>
  <path d="M833 372L900 351" marker-end="url(#ah)"/>
  <path d="M900 351L883 407" marker-end="url(#ah)"/>
  <path d="M900 351L1020 498" marker-end="url(#ah)"/>
  <path d="M820 425L1047 654" marker-end="url(#ah)"/>
  <path d="M1047 654L1328 412" marker-end="url(#ah)"/>
  <path d="M1162 376L580 552" marker-end="url(#ah)"/>
  <path d="M1192 431L675 671" marker-end="url(#ah)"/>
  <path d="M1260 590L1037 729" marker-end="url(#ah)"/>
  <path d="M1037 730L677 715" marker-end="url(#ah)"/>
 </g>
 <path d="M1224 537L1240 545L1236 549L1337 680L1233 553L1228 555Z" fill="#e6484b"/>
</svg>

<script src="https://cdn.jsdelivr.net/npm/bootstrap@5.3.0/dist/js/bootstrap.bundle.min.js"></script>
</body>
</html>
